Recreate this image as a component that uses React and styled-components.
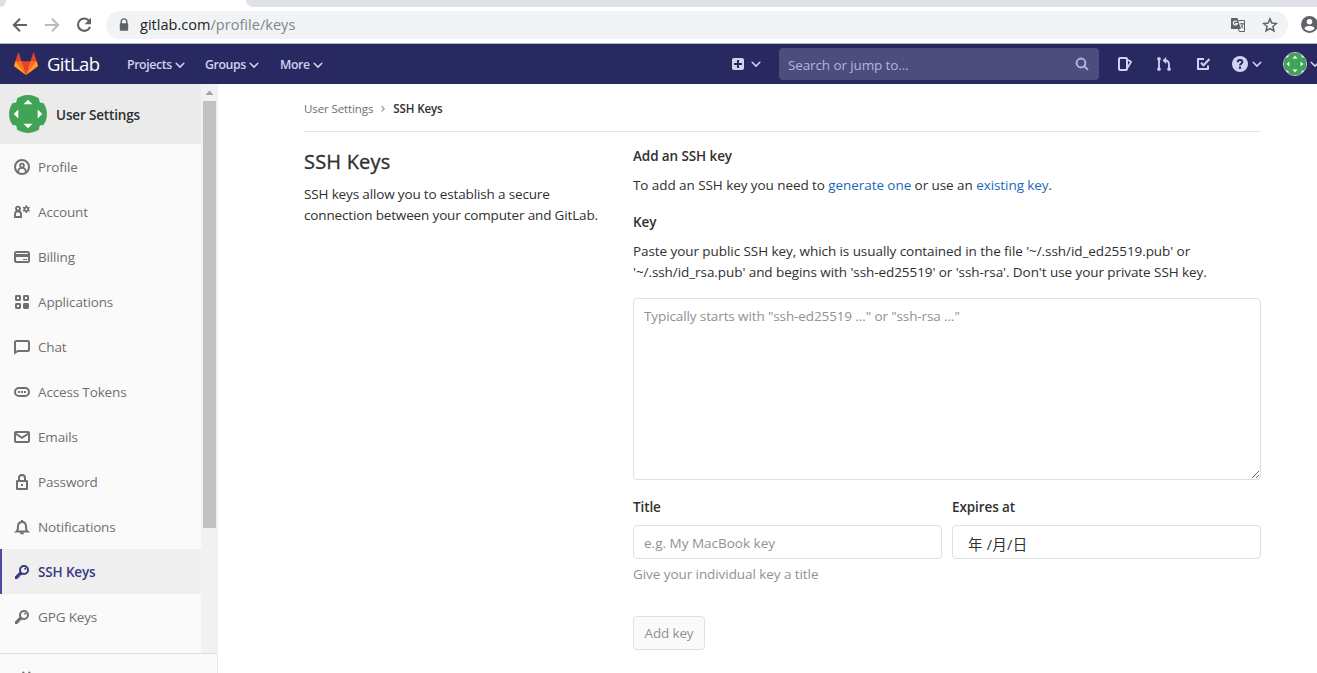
import React from 'react';
import styled, {createGlobalStyle} from 'styled-components';

const menu = [
    {texto: 'Profile', icono: 'profile'},
    {texto: 'Account', icono: 'account'},
    {texto: 'Billing', icono: 'billing'},
    {texto: 'Applications', icono: 'applications'},
    {texto: 'Chat', icono: 'chat'},
    {texto: 'Access Tokens', icono: 'token'},
    {texto: 'Emails', icono: 'mail'},
    {texto: 'Password', icono: 'lock'},
    {texto: 'Notifications', icono: 'bell'},
    {texto: 'SSH Keys', icono: 'key', activo: true},
    {texto: 'GPG Keys', icono: 'key'},
];

const dibujos = {
    profile: (
        <g fill="none" stroke="currentColor" strokeWidth="2">
            <circle cx="8" cy="8" r="7" />
            <circle cx="8" cy="6.6" r="1.9" strokeWidth="1.7" />
            <path d="M4.2 13c0-2.6 1.4-4.1 3.8-4.1s3.8 1.5 3.8 4.1" strokeWidth="1.8" />
        </g>
    ),
    account: (
        <g fill="none" stroke="currentColor">
            <circle cx="4" cy="4.6" r="2" strokeWidth="1.9" />
            <path d="M1 13V10.3c0-2 1.2-3.1 3-3.1s3 1.1 3 3.1V13z" strokeWidth="1.9" />
            <circle cx="12.3" cy="5.2" r="1.9" strokeWidth="1.7" />
            <path d="M12.3 1.3v1.6M12.3 7.5v1.6M9 3.3l1.3.7M14.3 6.4l1.3.7M9 7.1l1.3-.7M14.3 4l1.3-.7" strokeWidth="1.5" />
        </g>
    ),
    billing: (
        <g>
            <rect x="1" y="3" width="14" height="10" rx="1.5" fill="none" stroke="currentColor" strokeWidth="2" />
            <path d="M1 5h14v3H1zM9 10h4v1H9z" fill="currentColor" />
        </g>
    ),
    applications: (
        <g fill="none" stroke="currentColor" strokeWidth="2">
            <rect x="2" y="2" width="4" height="4" rx=".4" />
            <rect x="10" y="2" width="4" height="4" rx=".4" />
            <rect x="2" y="10" width="4" height="4" rx=".4" />
            <rect x="10" y="10" width="4" height="4" rx=".4" fill="currentColor" />
        </g>
    ),
    chat: (
        <path d="M1 13.8V3.5Q1 2 2.5 2h11Q15 2 15 3.5v7q0 1.5-1.5 1.5H4z" fill="none" stroke="currentColor" strokeWidth="2" />
    ),
    token: (
        <g>
            <rect x="1" y="4" width="14" height="8" rx="4" fill="none" stroke="currentColor" strokeWidth="2" />
            <path d="M4 7h2v2H4zM7 7h2v2H7zM10 7h2v2h-2z" fill="currentColor" />
        </g>
    ),
    mail: (
        <g fill="none" stroke="currentColor" strokeWidth="2">
            <rect x="1" y="3" width="14" height="10" rx="1" />
            <path d="M1.5 4.5L8 8.8l6.5-4.3" />
        </g>
    ),
    lock: (
        <g fill="none" stroke="currentColor" strokeWidth="2">
            <rect x="3" y="7" width="10" height="8" rx=".3" />
            <path d="M5 7V4a3 3 0 0 1 6 0v3" />
            <path d="M7 11h2" />
        </g>
    ),
    bell: (
        <g fill="none" stroke="currentColor" strokeWidth="2">
            <path d="M2.6 12.6C4 11.5 4 10 4 7.5 4 4.5 5.5 3 8 3s4 1.5 4 4.5c0 2.5 0 4 1.4 5.1z" />
            <path d="M8 1v2M6.2 14.2h3.6" />
        </g>
    ),
    key: (
        <g>
            <circle cx="10" cy="6" r="4" fill="none" stroke="currentColor" strokeWidth="2" />
            <path d="M6 7.6L1 12.6V15h2.8v-1.6h1.8v-1.8h1.5L9 9.7z" fill="currentColor" />
            <circle cx="11.2" cy="4.8" r="1" fill="currentColor" />
        </g>
    ),
    chevron: (
        <path d="M4.2 6.300l3.800 3.800 3.800-3.800" fill="none" stroke="currentColor" strokeWidth="1.5" strokeLinecap="round" strokeLinejoin="round" />
    ),
    plus: (
        <g>
            <rect x="2" y="2" width="12" height="12" rx="2" fill="currentColor" />
            <path d="M8 4v8M4 8h8" stroke="#292961" strokeWidth="2" />
        </g>
    ),
    search: (
        <g fill="none" stroke="currentColor" strokeWidth="2">
            <circle cx="7" cy="7" r="4.4" />
            <path d="M10.4 10.4l3 3" strokeLinecap="round" />
        </g>
    ),
    issues: (
        <g fill="none" stroke="currentColor" strokeWidth="2" strokeLinejoin="round">
            <rect x="2" y="2" width="8" height="12" rx="1" />
            <path d="M10.5 3.800l3.700 1.900-3.700 6" strokeWidth="1.7" />
        </g>
    ),
    merge: (
        <g fill="none" stroke="currentColor" strokeWidth="1.800">
            <path d="M3 3v10M13 13V8.500q0-4-4-4" />
            <g fill="currentColor" stroke="none">
                <rect x="1.300" y="1.200" width="3.400" height="3.200" rx="1.200" />
                <rect x="1.300" y="11.600" width="3.400" height="3.200" rx="1.200" />
                <rect x="11.300" y="11.600" width="3.400" height="3.200" rx="1.200" />
                <path d="M10.2 1v7L6.600 4.5z" />
            </g>
        </g>
    ),
    todo: (
        <g fill="none" stroke="currentColor" strokeWidth="2">
            <path d="M9 3H3v10h10V9.5" strokeLinejoin="round" />
            <path d="M6 6.800l2.500 2.500 6-6.300" />
        </g>
    ),
    help: (
        <g>
            <circle cx="8" cy="8" r="8" fill="currentColor" />
            <path d="M5.7 6.3C5.7 4.9 6.6 4 8 4s2.4.8 2.4 2.1C10.4 7.7 8 7.6 8 9.5" fill="none" stroke="#292961" strokeWidth="1.9" />
            <circle cx="8" cy="11.7" r="1.2" fill="#292961" />
        </g>
    ),
    collapse: (
        <path d="M7 2L2 8l5 6M13 2L8 8l5 6" fill="none" stroke="currentColor" strokeWidth="2" />
    ),
    back: (
        <path d="M15 8H2M8 1.8L1.8 8 8 14.2" fill="none" stroke="currentColor" strokeWidth="2" />
    ),
    forward: (
        <path d="M1 8h13M8 1.8L14.2 8 8 14.2" fill="none" stroke="currentColor" strokeWidth="2" />
    ),
    reload: (
        <g>
            <path d="M13.3 4.2A6.2 6.2 0 1 0 14 9.8" fill="none" stroke="currentColor" strokeWidth="2.1" />
            <path d="M15 .8v6.4H8.6z" fill="currentColor" />
        </g>
    ),
    padlock: (
        <g>
            <path d="M5.200 7V4.7a2.800 2.800 0 0 1 5.600 0V7" fill="none" stroke="currentColor" strokeWidth="1.4" />
            <rect x="3.800" y="6.3" width="8.400" height="7.400" rx="1" fill="currentColor" />
        </g>
    ),
    translate: (
        <g>
            <path d="M1.500 1h6l3.300 11H1.500Q1 12 1 11.500v-10Q1 1 1.500 1z" fill="currentColor" />
            <path d="M6.800 4.600A2 2 0 1 0 7.300 6.500H5.300" fill="none" stroke="#fff" strokeWidth="1.1" />
            <path d="M8.500 3.500h6v11H9.300l-.8-2.500M10 6.800h4M12 5.800v1M13 7c-.5 2-1.500 3.200-2.500 4M11 8.200c.5 1.400 1.300 2.200 2.300 2.900" fill="none" stroke="currentColor" strokeWidth="1" />
        </g>
    ),
    star: (
        <path d="M8 1.900l1.800 4.200 4.600.4-3.500 3 1.100 4.500L8 11.600 4 14l1.100-4.500-3.500-3 4.600-.4z" fill="none" stroke="currentColor" strokeWidth="1.5" />
    ),
    person: (
        <g>
            <circle cx="8" cy="8" r="8" fill="currentColor" />
            <circle cx="8" cy="5.4" r="2.6" fill="#fff" />
            <path d="M3.2 11.6C4 9.900 6 9.500 8 9.500s4 .4 4.800 2.100C11.800 13.200 10 14.100 8 14.100s-3.800-.9-4.800-2.500z" fill="#fff" />
        </g>
    ),
};

const Icono = ({nombre, size = 16}) => (
    <Svg width={size} height={size} viewBox="0 0 16 16">{dibujos[nombre]}</Svg>
);

const Tanuki = () => (
    <Svg width="24" height="24" viewBox="0 0 36 36">
        <path fill="#e24329" d="M2 14l9.38 9v-9l-4-12.28c-.205-.632-1.176-.632-1.38 0z" />
        <path fill="#e24329" d="M34 14l-9.38 9v-9l4-12.28c.205-.632 1.176-.632 1.38 0z" />
        <path fill="#e24329" d="M18 34.38L3 14h30z" />
        <path fill="#fc6d26" d="M18 34.38L11.38 14H2l4 11z" />
        <path fill="#fc6d26" d="M18 34.38L24.62 14H34l-4 11z" />
        <path fill="#fca326" d="M2 14L.1 20.16c-.18.565 0 1.2.5 1.56l17.42 12.66z" />
        <path fill="#fca326" d="M34 14l1.9 6.16c.18.565 0 1.2-.5 1.56L18 34.38z" />
    </Svg>
);

const Identicon = ({size}) => (
    <Avatar width={size} height={size} viewBox="0 0 38 38">
        <path fill="#40a457" d="M0 0h38v38H0z" />
        <path fill="#fff" d="M19 4.700l4.500 4.600h-9zM19 33.300l4.500-4.600h-9zM4.700 19l4.600-4.500v9zM33.300 19l-4.600-4.500v9z" />
        <path fill="#fff" d="M3 8.200l4.200-1L8.200 3 0 0zM35 8.200l-4.200-1-1-4.200L38 0zM3 29.800l4.200 1 1 4.200L0 38zM35 29.800l-4.200 1-1 4.200 8.200 3z" />
    </Avatar>
);

const App = () => {

    return (
        <Pagina>
            <Global />
            <Pestanas>
                <PestanaVecina $ancho="6px" $radio="0 0 6px 0" />
                <PestanaVecina $ancho="1071px" $radio="0 0 0 8px" />
            </Pestanas>
            <Navegador>
                <Boton $ancho="32px"><Icono nombre="back" /></Boton>
                <Boton $ancho="32px" $color="#babcbe"><Icono nombre="forward" /></Boton>
                <Boton $ancho="32px"><Icono nombre="reload" /></Boton>
                <BarraUrl>
                    <Icono nombre="padlock" />
                    <Url>gitlab.com<span>/profile/keys</span></Url>
                    <Icono nombre="translate" />
                    <Icono nombre="star" />
                </BarraUrl>
                <Boton $ancho="17px"><Icono nombre="person" size={17} /></Boton>
            </Navegador>
            <Navbar>
                <Tanuki />
                <Marca>GitLab</Marca>
                <NavLink $ancho="78px">Projects<Icono nombre="chevron" /></NavLink>
                <NavLink $ancho="75px">Groups<Icono nombre="chevron" /></NavLink>
                <NavLink $ancho="60px">More<Icono nombre="chevron" /></NavLink>
                <Nuevo><Icono nombre="plus" /><Icono nombre="chevron" /></Nuevo>
                <Buscar><span>Search or jump to...</span><Icono nombre="search" /></Buscar>
                <Accesos>
                    <Icono nombre="issues" />
                    <Icono nombre="merge" />
                    <Icono nombre="todo" />
                </Accesos>
                <Ayudas><Icono nombre="help" /><Icono nombre="chevron" /></Ayudas>
                <Usuario><Identicon size={24} /><Icono nombre="chevron" /></Usuario>
            </Navbar>
            <Cuerpo>
                <Lateral>
                    <Superior>
                        <Lista>
                            <Cabecera><Identicon size={38} /><span>User Settings</span></Cabecera>
                            {menu.map(m => (
                                <Item key={m.texto} $activo={m.activo}>
                                    <Icono nombre={m.icono} />{m.texto}
                                </Item>
                            ))}
                        </Lista>
                        <Scroll>
                            <svg width="17" height="17" viewBox="0 0 17 17"><path d="M4.5 11L8.5 6.500l4 4.500z" fill="#a3a3a3" /></svg>
                            <Pulgar />
                        </Scroll>
                    </Superior>
                    <Colapsar><Icono nombre="collapse" /></Colapsar>
                </Lateral>
                <Contenido>
                    <Migas>
                        User Settings
                        <svg width="6" height="8" viewBox="0 0 6 8"><path d="M1.5 1l2.700 2.700-2.700 2.700" fill="none" stroke="#999" strokeWidth="1.2" /></svg>
                        <b>SSH Keys</b>
                    </Migas>
                    <Columnas>
                        <Intro>
                            <h4>SSH Keys</h4>
                            <Parrafo $tracking="-0.15px">SSH keys allow you to establish a secure<br />connection between your computer and GitLab.</Parrafo>
                        </Intro>
                        <Formulario>
                            <Etiqueta>Add an SSH key</Etiqueta>
                            <Parrafo $abajo="16px">
                                To add an SSH key you need to <Enlace>generate one</Enlace> or use an <Enlace>existing key</Enlace>.
                            </Parrafo>
                            <Etiqueta>Key</Etiqueta>
                            <Parrafo $abajo="15px">
                                Paste your public SSH key, which is usually contained in the file '~/.ssh/id_ed25519.pub' or<br />
                                '~/.ssh/id_rsa.pub' and begins with 'ssh-ed25519' or 'ssh-rsa'. Don't use your private SSH key.
                            </Parrafo>
                            <Area placeholder={'Typically starts with "ssh-ed25519 …" or "ssh-rsa …"'} />
                            <Fila>
                                <div>
                                    <Etiqueta $abajo="7px">Title</Etiqueta>
                                    <Campo placeholder="e.g. My MacBook key" />
                                    <Ayuda>Give your individual key a title</Ayuda>
                                </div>
                                <div>
                                    <Etiqueta $abajo="7px">Expires at</Etiqueta>
                                    <Campo $fecha defaultValue="年 /月/日" />
                                </div>
                            </Fila>
                            <Agregar disabled>Add key</Agregar>
                        </Formulario>
                    </Columnas>
                </Contenido>
            </Cuerpo>
        </Pagina>
    );

}

export default App;

const Global = createGlobalStyle`
    * { box-sizing: border-box; }
    body {
        margin: 0;
        overflow: hidden;
        background: #fff;
    }
    body, input, textarea, button {
        font-family: "Open Sans", "Noto Sans CJK SC", sans-serif;
        font-size: 13.5px;
        letter-spacing: -0.15px;
    }
`;

const Svg = styled.svg`
    display: block;
    flex: none;
`;

const Avatar = styled(Svg)`
    border-radius: 50%;
`;

const Pagina = styled.div`
    width: 1317px;
    height: 673px;
    display: flex;
    flex-direction: column;
    overflow: hidden;
    color: #303030;
`;

const Pestanas = styled.div`
    height: 7px;
    display: flex;
    justify-content: space-between;
`;

const PestanaVecina = styled.div`
    width: ${p => p.$ancho};
    background: #dee1e6;
    border-radius: ${p => p.$radio};
`;

const Navegador = styled.div`
    height: 37px;
    padding: 0 0 1px 4px;
    display: flex;
    align-items: center;
    border-bottom: 1px solid #b5b5bd;
`;

const Boton = styled.div`
    width: ${p => p.$ancho};
    flex: none;
    display: flex;
    justify-content: center;
    color: ${p => p.$color || '#5f6368'};
`;

const BarraUrl = styled.div`
    width: 1182px;
    height: 28px;
    margin: 0 13px 0 6px;
    padding: 0 10px;
    display: flex;
    align-items: center;
    flex: none;
    gap: 16px;
    border-radius: 14px;
    background: #f1f3f4;
    color: #5f6368;
`;

const Url = styled.div`
    flex: 1;
    margin-left: -8px;
    font-size: 14.5px;
    letter-spacing: 0.03px;
    color: #202124;

    span { color: #80868b; }
`;

const Navbar = styled.div`
    height: 40px;
    flex: none;
    padding-left: 14px;
    display: flex;
    align-items: center;
    background: #292961;
    color: #d1d1f0;

    > * { flex: none; }
`;

const Marca = styled.div`
    width: 80px;
    margin-left: 9px;
    padding-bottom: 1px;
    font-size: 18.5px;
    letter-spacing: -0.6px;
    color: #fff;
`;

const NavLink = styled.div`
    width: ${p => p.$ancho};
    padding-top: 1px;
    display: flex;
    align-items: center;
    font-size: 12.3px;
    font-weight: 600;
    letter-spacing: -0.38px;
`;

const Nuevo = styled.div`
    margin-left: 390px;
    width: 49px;
    display: flex;
    gap: 2px;
`;

const Buscar = styled.div`
    width: 320px;
    height: 32px;
    padding: 0 9px;
    display: flex;
    align-items: center;
    justify-content: space-between;
    border-radius: 4px;
    background: #4c4c7d;
    color: #b4b4dc;

    span {
        padding-top: 1px;
        letter-spacing: -0.12px;
    }
`;

const Accesos = styled.div`
    width: 133px;
    padding-left: 18px;
    display: flex;
    gap: 23px;
`;

const Ayudas = styled.div`
    display: flex;
    gap: 1px;
`;

const Usuario = styled.div`
    margin-left: 18px;
    display: flex;
    align-items: center;

    ${Avatar} {
        border: 1px solid #d1d1f0;
    }
`;

const Cuerpo = styled.div`
    flex: 1;
    min-height: 0;
    display: flex;
`;

const Lateral = styled.div`
    width: 218px;
    flex: none;
    display: flex;
    flex-direction: column;
    background: #fafafa;
    border-right: 1px solid #e8e8e8;
`;

const Superior = styled.div`
    height: 569px;
    display: flex;
    width: 218px;
`;

const Lista = styled.div`
    width: 201px;
`;

const Cabecera = styled.div`
    height: 60px;
    padding-left: 9px;
    display: flex;
    align-items: center;
    gap: 9px;
    background: #ebebeb;
    color: #2e2e2e;
    font-weight: 600;

    span { padding-top: 2px; }
`;

const Item = styled.div`
    height: 45px;
    padding-left: ${p => p.$activo ? '12px' : '14px'};
    display: flex;
    align-items: center;
    gap: 8px;
    color: ${p => p.$activo ? '#393982' : '#707070'};
    font-weight: ${p => p.$activo ? 600 : 400};
    background: ${p => p.$activo ? '#efefef' : 'none'};
    border-left: ${p => p.$activo ? '2px solid #4b4ba3' : 'none'};
`;

const Scroll = styled.div`
    width: 17px;
    display: flex;
    flex-direction: column;
    align-items: center;
    background: #f1f1f1;
`;

const Pulgar = styled.div`
    width: 13px;
    height: 427px;
    background: #c1c1c1;
`;

const Colapsar = styled.div`
    flex: 1;
    padding: 16px 0 0 17px;
    overflow: hidden;
    border-top: 1px solid #dfdfdf;
    color: #707070;
`;

const Contenido = styled.div`
    width: 957px;
    margin-left: 86px;
`;

const Migas = styled.div`
    height: 48px;
    padding-top: 2px;
    display: flex;
    align-items: center;
    gap: 7px;
    font-size: 11.6px;
    color: #707070;
    border-bottom: 1px solid #e5e5e5;

    b {
        font-weight: 600;
        color: #303030;
    }
`;

const Columnas = styled.div`
    display: flex;
`;

const Intro = styled.div`
    width: 329px;
    padding-top: 16px;

    h4 {
        margin: 0 0 8px;
        font-size: 20px;
        line-height: 28px;
        font-weight: 500;
        letter-spacing: 0.2px;
        -webkit-text-stroke: 0.35px #303030;
    }
`;

const Formulario = styled.div`
    width: 628px;
    padding-top: 14px;
`;

const Etiqueta = styled.div`
    margin-bottom: ${p => p.$abajo || '8px'};
    line-height: 21px;
    font-weight: 600;
    letter-spacing: -0.1px;
`;

const Parrafo = styled.div`
    margin-bottom: ${p => p.$abajo || 0};
    line-height: 21px;
    letter-spacing: ${p => p.$tracking || '-0.07px'};
    white-space: nowrap;
`;

const Enlace = styled.a`
    color: #1b69b6;
`;

const Area = styled.textarea`
    display: block;
    width: 628px;
    height: 182px;
    padding: 7px 10px;
    line-height: 21px;
    letter-spacing: -0.11px;
    border: 1px solid #dfdfdf;
    border-radius: 4px;

    &::placeholder { color: #919191; }
`;

const Fila = styled.div`
    display: grid;
    grid-template-columns: 309px 309px;
    gap: 10px;
    margin-top: 17px;
`;

const Campo = styled.input`
    display: block;
    width: 309px;
    height: 34px;
    padding: 2px ${p => p.$fecha ? '15px' : '10px'} 0;
    font-size: ${p => p.$fecha ? '14.5px' : '13.5px'};
    letter-spacing: ${p => p.$fecha ? '0.25px' : '0'};
    border: 1px solid #dfdfdf;
    border-radius: 4px;
    color: #303030;

    &::placeholder { color: #919191; }
`;

const Ayuda = styled.div`
    margin-top: 5px;
    line-height: 21px;
    letter-spacing: -0.07px;
    color: #919191;
`;

const Agregar = styled.button`
    width: 72px;
    height: 34px;
    margin-top: 31px;
    padding: 0;
    border: 1px solid #dfdfdf;
    border-radius: 4px;
    background: #fafafa;
    color: #919191;
`;
